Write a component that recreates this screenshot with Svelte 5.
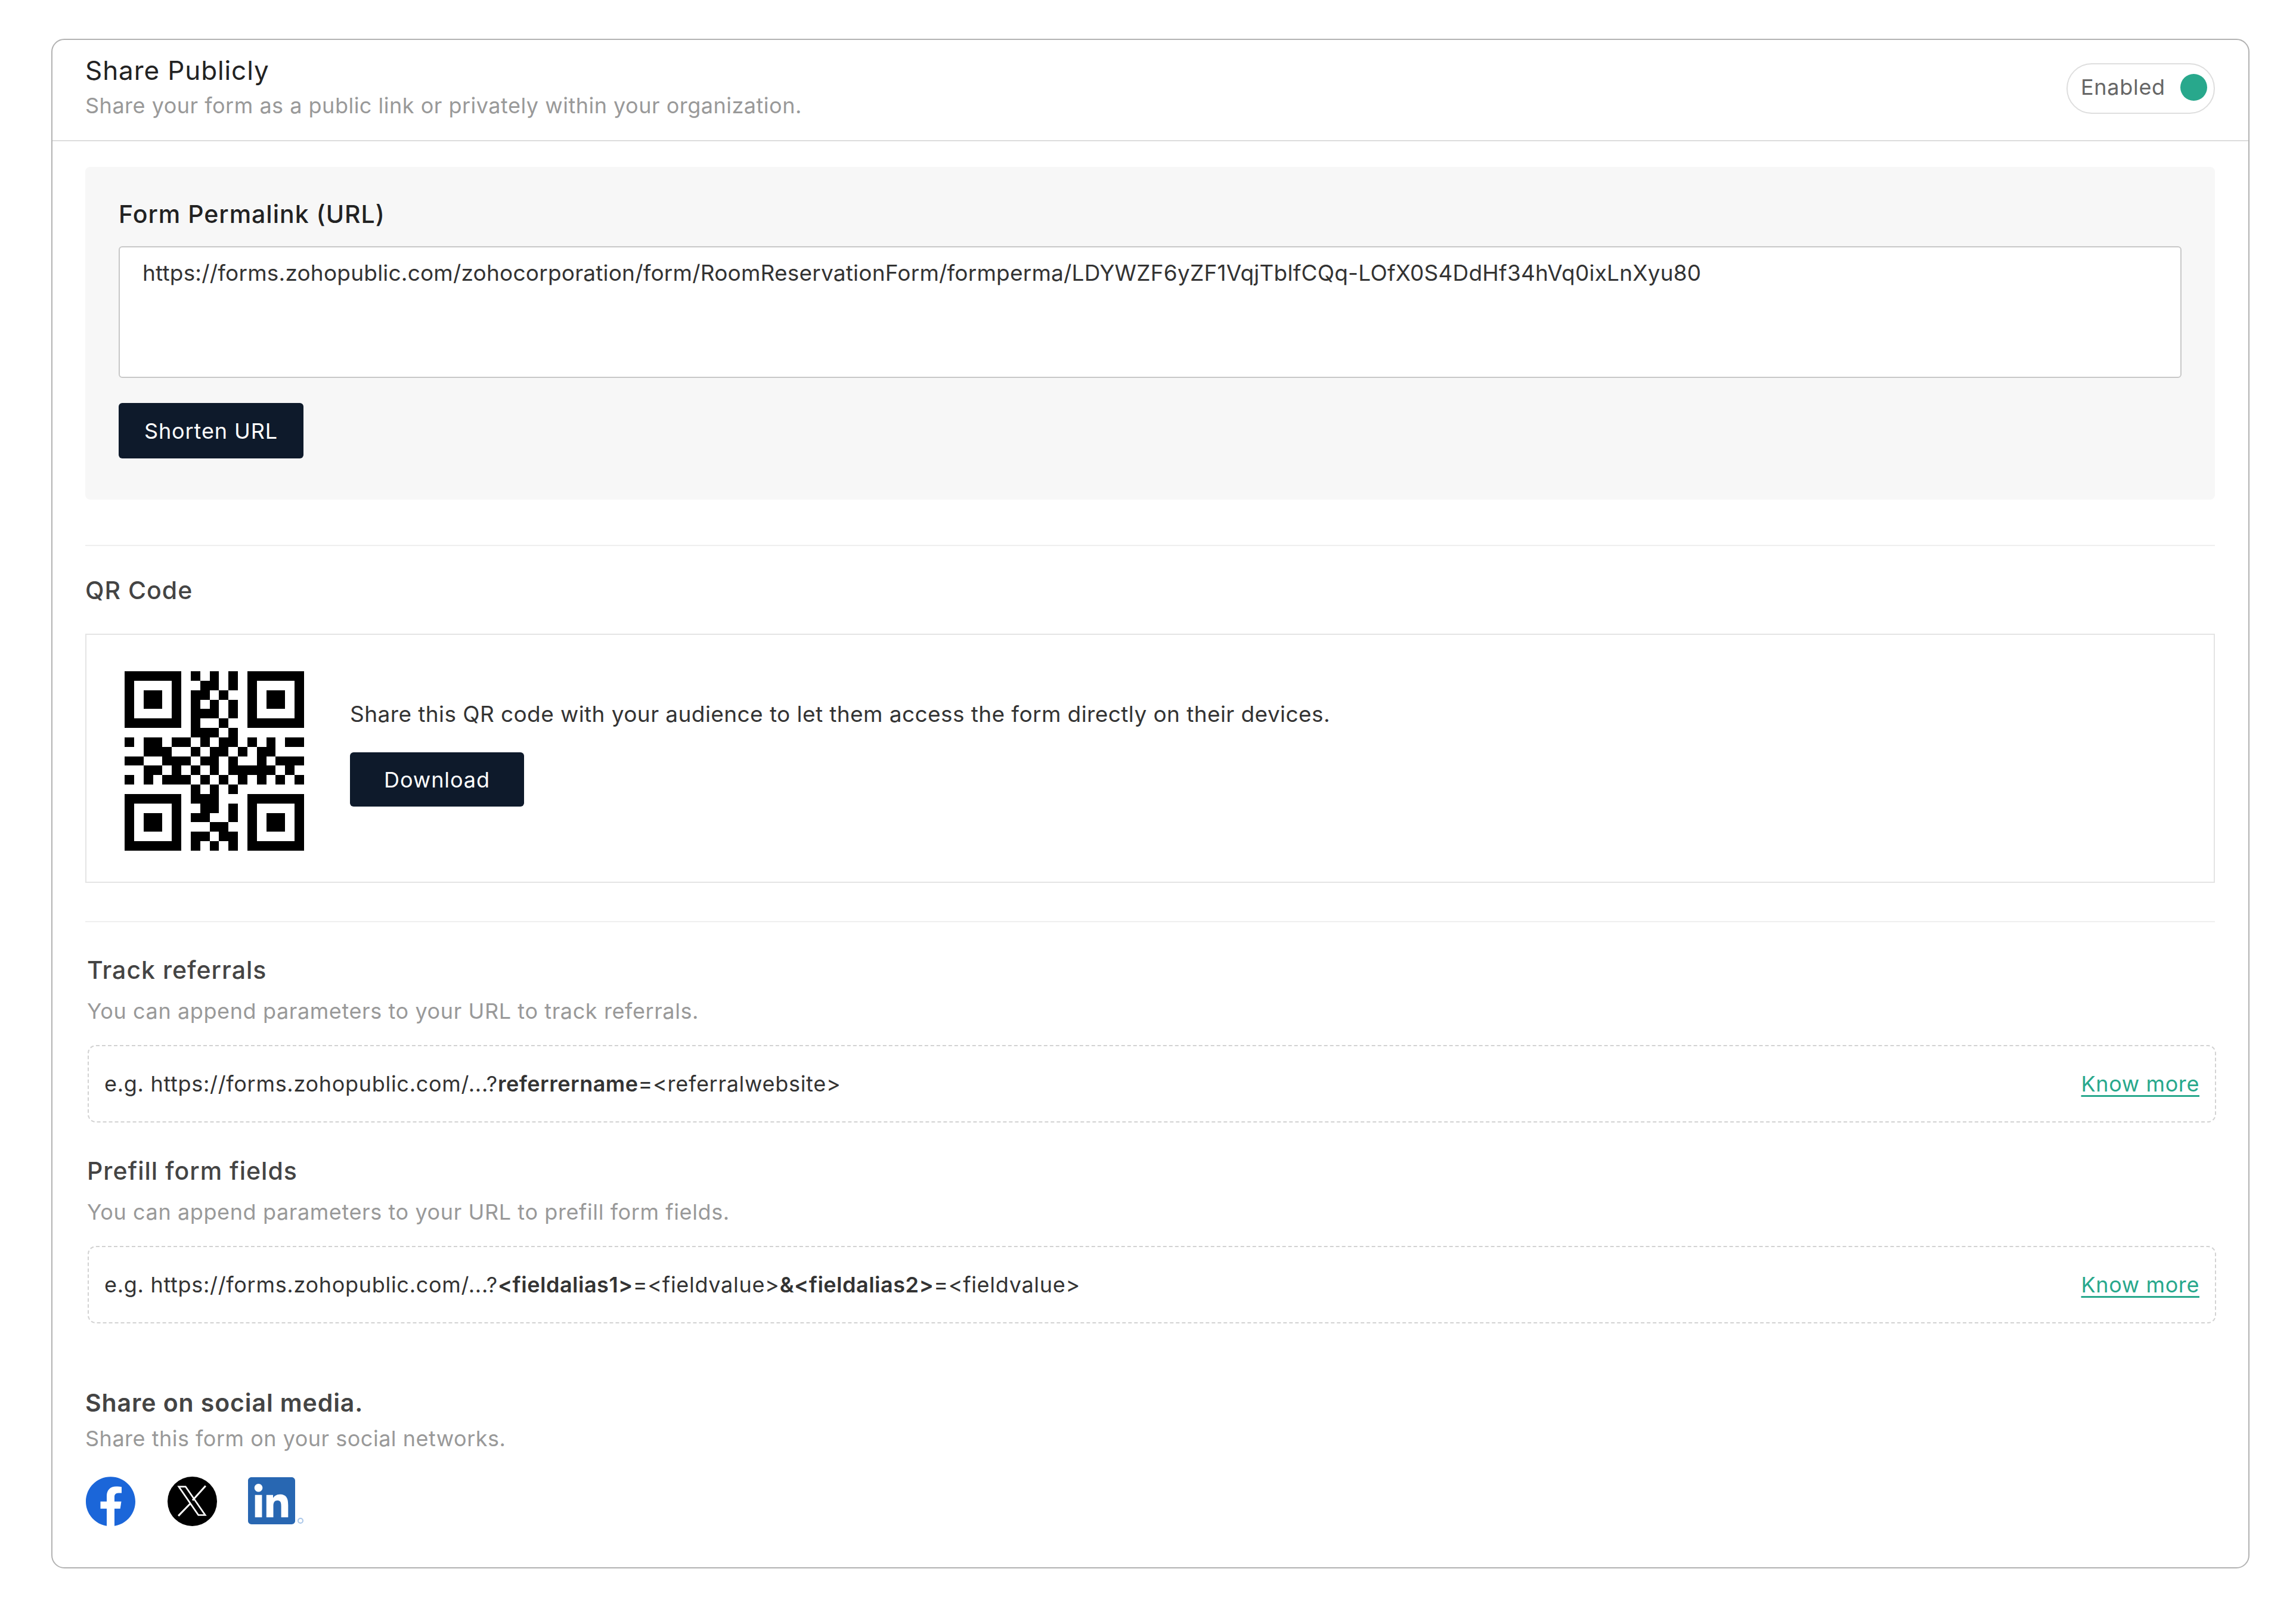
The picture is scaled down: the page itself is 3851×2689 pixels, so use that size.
<script>
	// qr grid, # = black module
	const qrRows = [
		"######.#.#.#.######",
		"#....#..##.#.#....#",
		"#.##.#.##.#..#.##.#",
		"#.##.#.#.#.#.#.##.#",
		"#....#.###.#.#....#",
		"######.#..#..######",
		".......###.#.......",
		"#.##.##.#.##.#.#.##",
		"..###..#.##.#.##...",
		"##..###.##.#..#.###",
		"..##.#.#.#.#####.#.",
		"#.#.###.#.#.#.#.#.#",
		".......#.#.#.......",
		"######.###...######",
		"#....#..##.#.#....#",
		"#.##.#.##..#.#.##.#",
		"#.##.#...##..#.##.#",
		"#....#.##.##.#....#",
		"######.#.#.#.######",
	];

	const modules = [];
	qrRows.forEach((row, y) => {
		for (let x = 0; x < row.length; x++) {
			if (row[x] === "#") modules.push({ x, y });
		}
	});
</script>

<div class="page">
	<div class="card">
		<header class="head">
			<div>
				<div class="title">Share Publicly</div>
				<div class="sub headSub">Share your form as a public link or privately within your organization.</div>
			</div>
			<div class="pill">
				<span>Enabled</span>
				<i class="dot"></i>
			</div>
		</header>

		<div class="content">
			<section class="panel">
				<div class="panelTitle">Form Permalink (URL)</div>
				<div class="urlBox">https://forms.zohopublic.com/zohocorporation/form/RoomReservationForm/formperma/LDYWZF6yZF1VqjTblfCQq-LOfX0S4DdHf34hVq0ixLnXyu80</div>
				<button class="btn shorten">Shorten URL</button>
			</section>

			<hr class="line first" />

			<div class="secTitle qrTitle">QR Code</div>
			<div class="qrBox">
				<svg class="qr" viewBox="0 0 19 19" shape-rendering="crispEdges">
					{#each modules as m}
						<rect x={m.x} y={m.y} width="1" height="1" fill="#000" />
					{/each}
				</svg>
				<div class="qrInfo">
					<div class="qrText">Share this QR code with your audience to let them access the form directly on their devices.</div>
					<button class="btn download">Download</button>
				</div>
			</div>

			<hr class="line second" />

			<div class="param">
				<div class="secTitle">Track referrals</div>
				<div class="sub paramSub">You can append parameters to your URL to track referrals.</div>
				<div class="example">
					<span>e.g. https://forms.zohopublic.com/...?<b>referrername</b>=&lt;referralwebsite&gt;</span>
					<a href="#referrals">Know more</a>
				</div>
			</div>

			<div class="param prefill">
				<div class="secTitle">Prefill form fields</div>
				<div class="sub paramSub">You can append parameters to your URL to prefill form fields.</div>
				<div class="example">
					<span>e.g. https://forms.zohopublic.com/...?<b>&lt;fieldalias1&gt;</b>=&lt;fieldvalue&gt;<b>&amp;&lt;fieldalias2&gt;</b>=&lt;fieldvalue&gt;</span>
					<a href="#prefill">Know more</a>
				</div>
			</div>

			<div class="socialTitle">Share on social media.</div>
			<div class="sub socialSub">Share this form on your social networks.</div>
			<div class="icons">
				<svg class="fb" viewBox="0 0 24 24">
					<path fill="#1b66d9" d="M24 12.073c0-6.627-5.373-12-12-12s-12 5.373-12 12c0 5.99 4.388 10.954 10.125 11.854v-8.385H7.078v-3.47h3.047V9.43c0-3.007 1.792-4.669 4.533-4.669 1.312 0 2.686.235 2.686.235v2.953H15.83c-1.491 0-1.956.925-1.956 1.874v2.25h3.328l-.532 3.47h-2.796v8.385C19.612 23.027 24 18.062 24 12.073z" />
				</svg>
				<svg class="xlogo" viewBox="0 0 247 247">
					<circle cx="123.5" cy="123.5" r="123.5" fill="#000" />
					<path fill="none" stroke="#fff" stroke-width="8" d="M56 50h34l98 142h-34z" />
					<path fill="none" stroke="#fff" stroke-width="9" d="M190 46l-65 72M54 196l58-60" />
				</svg>
				<svg class="li" viewBox="0 0 24 24">
					<path fill="#2867b2" d="M20.447 20.452h-3.554v-5.569c0-1.328-.027-3.037-1.852-3.037-1.853 0-2.136 1.445-2.136 2.939v5.667H9.351V9h3.414v1.561h.046c.477-.9 1.637-1.85 3.37-1.85 3.601 0 4.267 2.37 4.267 5.455v6.286zM5.337 7.433c-1.144 0-2.063-.926-2.063-2.065 0-1.138.92-2.063 2.063-2.063 1.14 0 2.064.925 2.064 2.063 0 1.139-.925 2.065-2.064 2.065zm1.782 13.019H3.555V9h3.564v11.452zM22.225 0H1.771C.792 0 0 .774 0 1.729v20.542C0 23.227.792 24 1.771 24h20.451C23.2 24 24 23.227 24 22.271V1.729C24 .774 23.2 0 22.222 0h.003z" />
				</svg>
				<i class="reg"></i>
			</div>
		</div>
	</div>
</div>

<style>
	:global(body) {
		margin: 0;
		background: #fff;
	}

	.page {
		padding: 65px 78px 58px 86px;
		font-family: Inter, "Liberation Sans", sans-serif;
		color: #333;
	}

	.card {
		box-sizing: border-box;
		width: 3687px;
		height: 2566px;
		border: 2px solid #b2b2b2;
		border-radius: 22px;
	}

	.head {
		box-sizing: border-box;
		height: 170px;
		padding: 21px 56px 0 55px;
		display: flex;
		justify-content: space-between;
		align-items: flex-start;
		border-bottom: 2px solid #dcdcdc;
	}

	.title {
		font-size: 44px;
		line-height: 60px;
		color: #222;
		letter-spacing: 0.9px;
	}

	.sub {
		font-size: 36px;
		line-height: 50px;
		color: #999;
		letter-spacing: 0.5px;
	}

	.headSub {
		margin-top: 4px;
	}

	.pill {
		box-sizing: border-box;
		width: 249px;
		height: 85px;
		margin-top: 18px;
		padding: 0 11px 5px 22px;
		display: flex;
		align-items: center;
		justify-content: space-between;
		border: 2px solid #dedede;
		border-radius: 43px;
		font-size: 36px;
		letter-spacing: 0.7px;
		color: #666;
	}

	.dot {
		width: 45px;
		height: 45px;
		border-radius: 50%;
		background: #28a88c;
	}

	.content {
		padding: 43px 56px 0 55px;
	}

	.panel {
		box-sizing: border-box;
		height: 558px;
		padding: 54px 56px 0;
		background: #f7f7f7;
		border-radius: 8px;
	}

	.panelTitle {
		font-size: 41px;
		line-height: 50px;
		font-weight: 500;
		color: #222;
		letter-spacing: 1px;
	}

	.urlBox {
		box-sizing: border-box;
		height: 221px;
		margin-top: 29px;
		padding: 18px 38px;
		background: #fff;
		border: 2px solid #c8c8c8;
		border-radius: 6px;
		font-size: 37px;
		line-height: 50px;
		color: #333;
		letter-spacing: 0.2px;
	}

	.btn {
		display: block;
		box-sizing: border-box;
		padding: 0;
		border: 0;
		border-radius: 6px;
		background: #0e1a2b;
		color: #fff;
		font-family: inherit;
		font-size: 36px;
		letter-spacing: 0.9px;
	}

	.shorten {
		width: 310px;
		height: 93px;
		margin-top: 42px;
	}

	.line {
		margin: 0;
		border: 0;
		height: 2px;
		background: #efefef;
	}

	.first {
		margin-top: 76px;
	}

	.secTitle {
		font-size: 41px;
		line-height: 50px;
		font-weight: 500;
		color: #444;
		letter-spacing: 1px;
	}

	.qrTitle {
		margin-top: 49px;
	}

	.qrBox {
		box-sizing: border-box;
		height: 418px;
		margin-top: 48px;
		padding: 61px 0 0 64px;
		display: flex;
		align-items: flex-start;
		gap: 77px;
		border: 2px solid #e4e4e4;
	}

	.qr {
		width: 301px;
		height: 301px;
		flex-shrink: 0;
	}

	.qrInfo {
		padding-top: 47px;
	}

	.qrText {
		font-size: 37px;
		line-height: 50px;
		color: #333;
		letter-spacing: 0.42px;
	}

	.download {
		width: 292px;
		height: 91px;
		margin-top: 39px;
	}

	.second {
		margin-top: 64px;
	}

	.param {
		margin: 55px -2px 0 3px;
	}

	.prefill {
		margin-top: 56px;
	}

	.paramSub {
		margin-top: 19px;
		letter-spacing: 0.6px;
	}

	.example {
		box-sizing: border-box;
		height: 130px;
		margin: 32px 0 0 1px;
		padding: 0 26px;
		display: flex;
		align-items: center;
		justify-content: space-between;
		border: 2px dashed #d2d2d2;
		border-radius: 14px;
		font-size: 36px;
		color: #333;
		letter-spacing: 0.7px;
	}

	.example b {
		font-weight: 600;
		letter-spacing: 0.5px;
	}

	.example a {
		color: #28a88c;
		text-decoration: underline;
		text-underline-offset: 6px;
		letter-spacing: 0.6px;
	}

	.socialTitle {
		margin-top: 108px;
		font-size: 41px;
		line-height: 50px;
		font-weight: 600;
		color: #444;
		letter-spacing: 0.9px;
	}

	.socialSub {
		margin-top: 10px;
	}

	.icons {
		margin: 39px 0 0 1px;
		display: flex;
		align-items: flex-start;
	}

	.fb,
	.xlogo {
		width: 83px;
		height: 83px;
	}

	.xlogo {
		margin-left: 54px;
	}

	.li {
		width: 79px;
		height: 79px;
		margin: 1px 0 0 52px;
	}

	.reg {
		box-sizing: border-box;
		width: 10px;
		height: 10px;
		margin: 69px 0 0 4px;
		border: 2px solid #a9c6e8;
		border-radius: 50%;
	}
</style>
